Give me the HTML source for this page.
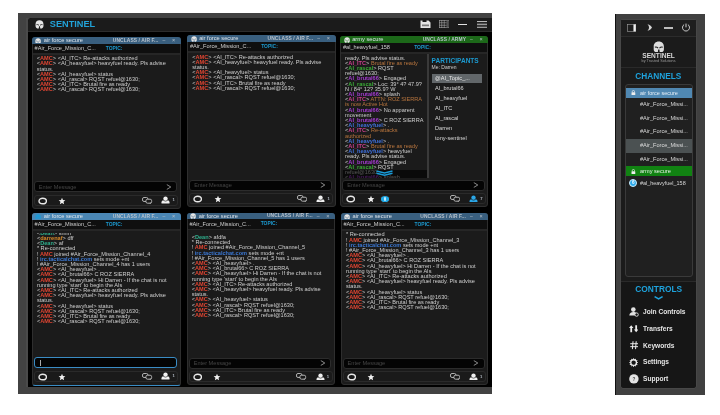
<!DOCTYPE html><html><head><meta charset="utf-8"><style>
html,body{margin:0;padding:0;background:#fff;width:720px;height:415px;overflow:hidden;font-family:"Liberation Sans", sans-serif;-webkit-font-smoothing:antialiased;}
b{font-weight:bold}
</style></head><body><div style="position:relative;width:720px;height:415px;overflow:hidden;will-change:transform">
<div style="position:absolute;left:18px;top:13px;width:474px;height:381px;background:#424242"></div>
<div style="position:absolute;left:26px;top:18px;width:2px;height:369px;background:#4a4a4a"></div>
<div style="position:absolute;left:28px;top:18px;width:464px;height:369.4px;background:#000;border-radius:4px 0 0 0"></div>
<div style="position:absolute;left:28px;top:18px;width:464px;height:13px;background:#1b1b1b;border-radius:4px 0 0 0"></div>
<div style="position:absolute;left:28px;top:31px;width:464px;height:0.9px;background:#2c2c2c"></div>
<svg style="position:absolute;left:35.3px;top:19.9px" width="9" height="8.8" viewBox="0 0 20 20" preserveAspectRatio="none"><path d="M10 0.8C4.3 0.8 1.2 4.5 1.2 9.5V13.8C1.2 16.5 2.8 18.6 5 19.2H8.4L8.9 14.3H11.1L11.6 19.2H15C17.2 18.6 18.8 16.5 18.8 13.8V9.5C18.8 4.5 15.7 0.8 10 0.8Z" fill="#e6e6e6"/><path d="M3.2 10.6Q6 9.4 8.9 12" stroke="#1b1b1b" stroke-width="1.9" fill="none"/><path d="M16.8 10.6Q14 9.4 11.1 12" stroke="#1b1b1b" stroke-width="1.9" fill="none"/></svg>
<div style="position:absolute;left:49.8px;top:19.08px;font-size:9.2px;line-height:11.04px;color:#22a2d8;font-weight:bold;white-space:nowrap;">SENTINEL</div>
<svg style="position:absolute;left:420px;top:20px" width="11" height="8.5" viewBox="0 0 22 17"><path d="M1 1h4v3h8V1h4l4 4v11H1z" fill="#e4e4e4"/><rect x="4" y="9" width="14" height="3.5" fill="#7a7a7a"/></svg>
<svg style="position:absolute;left:438.5px;top:20.2px" width="10.5" height="8" viewBox="0 0 21 16"><g fill="none" stroke="#a8a8a8" stroke-width="1.2"><rect x="0.6" y="0.6" width="19.8" height="14.8"/><line x1="5.5" y1="0" x2="5.5" y2="16"/><line x1="10.5" y1="0" x2="10.5" y2="16"/><line x1="0" y1="5.5" x2="16" y2="5.5"/><line x1="0" y1="10.5" x2="16" y2="10.5"/></g><rect x="15" y="1.5" width="4.5" height="13" fill="#555"/></svg>
<div style="position:absolute;left:457.5px;top:23.6px;width:9.2px;height:1.5px;background:#e0e0e0"></div>
<svg style="position:absolute;left:476.5px;top:20.6px" width="10.5" height="7" viewBox="0 0 21 14"><rect x="0" y="0.5" width="21" height="1.6" fill="#eee"/><rect x="0" y="5.2" width="21" height="3.2" fill="#9a9a9a"/><rect x="0" y="11.6" width="21" height="1.6" fill="#eee"/></svg>
<div style="position:absolute;left:31.8px;top:37px;width:149.0px;height:171.8px;background:#1b1b1b;border:1px solid #2e2e2e;box-sizing:border-box;border-radius:3px;overflow:hidden"></div>
<div style="position:absolute;left:31.8px;top:37px;width:149.0px;height:6.8px;background:#395f7f;border-radius:3px 3px 0 0"></div>
<svg style="position:absolute;left:35.4px;top:37.6px" width="6.2" height="5.9" viewBox="0 0 20 20" preserveAspectRatio="none"><path d="M10 0.8C4.3 0.8 1.2 4.5 1.2 9.5V13.8C1.2 16.5 2.8 18.6 5 19.2H8.4L8.9 14.3H11.1L11.6 19.2H15C17.2 18.6 18.8 16.5 18.8 13.8V9.5C18.8 4.5 15.7 0.8 10 0.8Z" fill="#e6e6e6"/><path d="M3.2 10.6Q6 9.4 8.9 12" stroke="#395f7f" stroke-width="1.9" fill="none"/><path d="M16.8 10.6Q14 9.4 11.1 12" stroke="#395f7f" stroke-width="1.9" fill="none"/></svg>
<div style="position:absolute;left:43.8px;top:37.08px;font-size:5.7px;line-height:6.84px;color:#dce3ea;font-weight:normal;white-space:nowrap;">air force secure</div>
<div style="position:absolute;right:561.60px;top:37.66px;font-size:4.9px;line-height:5.88px;color:#b8c2cc;font-weight:bold;letter-spacing:0.1px;white-space:nowrap">UNCLASS / AIR F...</div>
<div style="position:absolute;left:162.5px;top:37.20px;font-size:5px;line-height:6.00px;color:#b8c0c8;font-weight:normal;white-space:nowrap;">&#8211;</div>
<div style="position:absolute;left:172.0px;top:37.10px;font-size:5.5px;line-height:6.60px;color:#b8c0c8;font-weight:normal;white-space:nowrap;">&#215;</div>
<div style="position:absolute;left:32.8px;top:43.8px;width:147.0px;height:9.2px;background:#0f0f0f"></div>
<div style="position:absolute;left:32.8px;top:53.1px;width:147.0px;height:1.8px;background:#262626"></div>
<div style="position:absolute;left:34.6px;top:45.04px;font-size:5.6px;line-height:6.72px;color:#cfcfcf;font-weight:normal;white-space:nowrap;">#Air_Force_Mission_C...</div>
<div style="position:absolute;left:105.8px;top:45.63px;font-size:4.95px;line-height:5.94px;color:#1c9ad0;font-weight:bold;white-space:nowrap;">TOPIC:</div>
<div style="position:absolute;left:32.8px;top:54.90px;width:147.0px;height:124.40px;overflow:hidden">
<div style="position:absolute;left:4.0px;top:0.34px;font-size:5.6px;line-height:6.72px;color:#cfcfcf;font-weight:normal;white-space:nowrap;">&lt;<b style="color:#e04532">AMC</b>&gt; &lt;AI_ITC&gt; Re-attacks authorized</div>
<div style="position:absolute;left:4.0px;top:5.54px;font-size:5.6px;line-height:6.72px;color:#cfcfcf;font-weight:normal;white-space:nowrap;">&lt;<b style="color:#e04532">AMC</b>&gt; &lt;AI_heavyfuel&gt; heavyfuel ready. Pls advise</div>
<div style="position:absolute;left:4.0px;top:10.74px;font-size:5.6px;line-height:6.72px;color:#cfcfcf;font-weight:normal;white-space:nowrap;">status.</div>
<div style="position:absolute;left:4.0px;top:15.94px;font-size:5.6px;line-height:6.72px;color:#cfcfcf;font-weight:normal;white-space:nowrap;">&lt;<b style="color:#e04532">AMC</b>&gt; &lt;AI_heavyfuel&gt; status</div>
<div style="position:absolute;left:4.0px;top:21.14px;font-size:5.6px;line-height:6.72px;color:#cfcfcf;font-weight:normal;white-space:nowrap;">&lt;<b style="color:#e04532">AMC</b>&gt; &lt;AI_rascal&gt; RQST refuel@1630;</div>
<div style="position:absolute;left:4.0px;top:26.34px;font-size:5.6px;line-height:6.72px;color:#cfcfcf;font-weight:normal;white-space:nowrap;">&lt;<b style="color:#e04532">AMC</b>&gt; &lt;AI_ITC&gt; Brutal fire as ready</div>
<div style="position:absolute;left:4.0px;top:31.54px;font-size:5.6px;line-height:6.72px;color:#cfcfcf;font-weight:normal;white-space:nowrap;">&lt;<b style="color:#e04532">AMC</b>&gt; &lt;AI_rascal&gt; RQST refuel@1630;</div>
</div>
<div style="position:absolute;left:34.0px;top:181.3px;width:143.2px;height:11.2px;background:#040404;border:1px solid #2c2c2c;box-sizing:border-box;border-radius:3px"></div>
<div style="position:absolute;left:38.8px;top:183.64px;font-size:5.6px;line-height:6.72px;color:#464646;font-weight:normal;white-space:nowrap;">Enter Message</div>
<svg style="position:absolute;left:165.60000000000002px;top:183.9px" width="5.6" height="6" viewBox="0 0 5.6 6"><path d="M0.8 0.6L4.8 3 0.8 5.4" stroke="#9a9a9a" stroke-width="0.9" fill="none"/></svg>
<div style="position:absolute;left:34.0px;top:194.9px;width:144.4px;height:11.1px;background:#1a1a1a;border:1px solid #2a2a2a;box-sizing:border-box;border-radius:3px"></div>
<svg style="position:absolute;left:38.0px;top:196.60000000000002px" width="9.4" height="8" viewBox="0 0 9.4 8"><ellipse cx="4.7" cy="4" rx="3.7" ry="2.8" stroke="#e8e8e8" stroke-width="1.4" fill="none"/></svg>
<svg style="position:absolute;left:58.400000000000006px;top:196.60000000000002px" width="8" height="8" viewBox="0 0 24 24"><path d="M12 2l2.9 6.9 7.1.6-5.4 4.7 1.7 7.3L12 17.7 5.7 21.5l1.7-7.3L2 9.5l7.1-.6z" fill="#f0f0f0"/></svg>
<svg style="position:absolute;left:142.20000000000002px;top:196.50000000000003px" width="10.4" height="7.2" viewBox="0 0 21 14.5"><rect x="1" y="1" width="11" height="8" rx="3" fill="none" stroke="#c4c4c4" stroke-width="1.8"/><rect x="8" y="4.5" width="11.5" height="8" rx="3" fill="#1a1a1a" stroke="#c4c4c4" stroke-width="1.8"/><path d="M15 12l2.5 2.2V11z" fill="#c4c4c4"/></svg>
<svg style="position:absolute;left:161.4px;top:196.20000000000002px" width="9" height="7.6" viewBox="0 0 18 15"><path d="M1 15v-2.5C1 9.5 3.5 8 9 8s8 1.5 8 4.5V15z" fill="#f0f0f0"/><circle cx="9" cy="5.2" r="5" fill="#f0f0f0" stroke="#1a1a1a" stroke-width="1.2"/></svg>
<div style="position:absolute;left:172.60000000000002px;top:197.48px;font-size:4.2px;line-height:5.04px;color:#b4bcc6;font-weight:bold;white-space:nowrap;">1</div>
<div style="position:absolute;left:187.2px;top:35.1px;width:148.40000000000003px;height:172.0px;background:#1b1b1b;border:1px solid #2e2e2e;box-sizing:border-box;border-radius:3px;overflow:hidden"></div>
<div style="position:absolute;left:187.2px;top:35.1px;width:148.40000000000003px;height:6.8px;background:#395f7f;border-radius:3px 3px 0 0"></div>
<svg style="position:absolute;left:190.79999999999998px;top:35.7px" width="6.2" height="5.9" viewBox="0 0 20 20" preserveAspectRatio="none"><path d="M10 0.8C4.3 0.8 1.2 4.5 1.2 9.5V13.8C1.2 16.5 2.8 18.6 5 19.2H8.4L8.9 14.3H11.1L11.6 19.2H15C17.2 18.6 18.8 16.5 18.8 13.8V9.5C18.8 4.5 15.7 0.8 10 0.8Z" fill="#e6e6e6"/><path d="M3.2 10.6Q6 9.4 8.9 12" stroke="#395f7f" stroke-width="1.9" fill="none"/><path d="M16.8 10.6Q14 9.4 11.1 12" stroke="#395f7f" stroke-width="1.9" fill="none"/></svg>
<div style="position:absolute;left:199.2px;top:35.18px;font-size:5.7px;line-height:6.84px;color:#dce3ea;font-weight:normal;white-space:nowrap;">air force secure</div>
<div style="position:absolute;right:406.80px;top:35.76px;font-size:4.9px;line-height:5.88px;color:#b8c2cc;font-weight:bold;letter-spacing:0.1px;white-space:nowrap">UNCLASS / AIR F...</div>
<div style="position:absolute;left:317.3px;top:35.30px;font-size:5px;line-height:6.00px;color:#b8c0c8;font-weight:normal;white-space:nowrap;">&#8211;</div>
<div style="position:absolute;left:326.8px;top:35.20px;font-size:5.5px;line-height:6.60px;color:#b8c0c8;font-weight:normal;white-space:nowrap;">&#215;</div>
<div style="position:absolute;left:188.2px;top:41.9px;width:146.40000000000003px;height:9.2px;background:#0f0f0f"></div>
<div style="position:absolute;left:188.2px;top:51.2px;width:146.40000000000003px;height:1.8px;background:#262626"></div>
<div style="position:absolute;left:190.0px;top:43.14px;font-size:5.6px;line-height:6.72px;color:#cfcfcf;font-weight:normal;white-space:nowrap;">#Air_Force_Mission_C...</div>
<div style="position:absolute;left:261.2px;top:43.73px;font-size:4.95px;line-height:5.94px;color:#1c9ad0;font-weight:bold;white-space:nowrap;">TOPIC:</div>
<div style="position:absolute;left:188.2px;top:53.00px;width:146.40000000000003px;height:124.60px;overflow:hidden">
<div style="position:absolute;left:4.1px;top:0.54px;font-size:5.6px;line-height:6.72px;color:#cfcfcf;font-weight:normal;white-space:nowrap;">&lt;<b style="color:#e04532">AMC</b>&gt; &lt;AI_ITC&gt; Re-attacks authorized</div>
<div style="position:absolute;left:4.1px;top:5.74px;font-size:5.6px;line-height:6.72px;color:#cfcfcf;font-weight:normal;white-space:nowrap;">&lt;<b style="color:#e04532">AMC</b>&gt; &lt;AI_heavyfuel&gt; heavyfuel ready. Pls advise</div>
<div style="position:absolute;left:4.1px;top:10.94px;font-size:5.6px;line-height:6.72px;color:#cfcfcf;font-weight:normal;white-space:nowrap;">status.</div>
<div style="position:absolute;left:4.1px;top:16.14px;font-size:5.6px;line-height:6.72px;color:#cfcfcf;font-weight:normal;white-space:nowrap;">&lt;<b style="color:#e04532">AMC</b>&gt; &lt;AI_heavyfuel&gt; status</div>
<div style="position:absolute;left:4.1px;top:21.34px;font-size:5.6px;line-height:6.72px;color:#cfcfcf;font-weight:normal;white-space:nowrap;">&lt;<b style="color:#e04532">AMC</b>&gt; &lt;AI_rascal&gt; RQST refuel@1630;</div>
<div style="position:absolute;left:4.1px;top:26.54px;font-size:5.6px;line-height:6.72px;color:#cfcfcf;font-weight:normal;white-space:nowrap;">&lt;<b style="color:#e04532">AMC</b>&gt; &lt;AI_ITC&gt; Brutal fire as ready</div>
<div style="position:absolute;left:4.1px;top:31.74px;font-size:5.6px;line-height:6.72px;color:#cfcfcf;font-weight:normal;white-space:nowrap;">&lt;<b style="color:#e04532">AMC</b>&gt; &lt;AI_rascal&gt; RQST refuel@1630;</div>
</div>
<div style="position:absolute;left:189.39999999999998px;top:179.6px;width:142.60000000000002px;height:11.2px;background:#040404;border:1px solid #2c2c2c;box-sizing:border-box;border-radius:3px"></div>
<div style="position:absolute;left:194.2px;top:181.94px;font-size:5.6px;line-height:6.72px;color:#464646;font-weight:normal;white-space:nowrap;">Enter Message</div>
<svg style="position:absolute;left:320.40000000000003px;top:182.2px" width="5.6" height="6" viewBox="0 0 5.6 6"><path d="M0.8 0.6L4.8 3 0.8 5.4" stroke="#9a9a9a" stroke-width="0.9" fill="none"/></svg>
<div style="position:absolute;left:189.39999999999998px;top:193.2px;width:143.80000000000004px;height:11.1px;background:#1a1a1a;border:1px solid #2a2a2a;box-sizing:border-box;border-radius:3px"></div>
<svg style="position:absolute;left:193.39999999999998px;top:194.9px" width="9.4" height="8" viewBox="0 0 9.4 8"><ellipse cx="4.7" cy="4" rx="3.7" ry="2.8" stroke="#e8e8e8" stroke-width="1.4" fill="none"/></svg>
<svg style="position:absolute;left:213.79999999999998px;top:194.9px" width="8" height="8" viewBox="0 0 24 24"><path d="M12 2l2.9 6.9 7.1.6-5.4 4.7 1.7 7.3L12 17.7 5.7 21.5l1.7-7.3L2 9.5l7.1-.6z" fill="#f0f0f0"/></svg>
<svg style="position:absolute;left:297.0px;top:194.8px" width="10.4" height="7.2" viewBox="0 0 21 14.5"><rect x="1" y="1" width="11" height="8" rx="3" fill="none" stroke="#c4c4c4" stroke-width="1.8"/><rect x="8" y="4.5" width="11.5" height="8" rx="3" fill="#1a1a1a" stroke="#c4c4c4" stroke-width="1.8"/><path d="M15 12l2.5 2.2V11z" fill="#c4c4c4"/></svg>
<svg style="position:absolute;left:316.20000000000005px;top:194.5px" width="9" height="7.6" viewBox="0 0 18 15"><path d="M1 15v-2.5C1 9.5 3.5 8 9 8s8 1.5 8 4.5V15z" fill="#f0f0f0"/><circle cx="9" cy="5.2" r="5" fill="#f0f0f0" stroke="#1a1a1a" stroke-width="1.2"/></svg>
<div style="position:absolute;left:327.40000000000003px;top:195.78px;font-size:4.2px;line-height:5.04px;color:#b4bcc6;font-weight:bold;white-space:nowrap;">1</div>
<div style="position:absolute;left:340.2px;top:36.2px;width:148.2px;height:171.10000000000002px;background:#1b1b1b;border:1px solid #2e2e2e;box-sizing:border-box;border-radius:3px;overflow:hidden"></div>
<div style="position:absolute;left:340.2px;top:36.2px;width:148.2px;height:6.8px;background:#1c6819;border-radius:3px 3px 0 0"></div>
<svg style="position:absolute;left:343.8px;top:36.800000000000004px" width="6.2" height="5.9" viewBox="0 0 20 20" preserveAspectRatio="none"><path d="M10 0.8C4.3 0.8 1.2 4.5 1.2 9.5V13.8C1.2 16.5 2.8 18.6 5 19.2H8.4L8.9 14.3H11.1L11.6 19.2H15C17.2 18.6 18.8 16.5 18.8 13.8V9.5C18.8 4.5 15.7 0.8 10 0.8Z" fill="#e6e6e6"/><path d="M3.2 10.6Q6 9.4 8.9 12" stroke="#1c6819" stroke-width="1.9" fill="none"/><path d="M16.8 10.6Q14 9.4 11.1 12" stroke="#1c6819" stroke-width="1.9" fill="none"/></svg>
<div style="position:absolute;left:352.2px;top:36.28px;font-size:5.7px;line-height:6.84px;color:#dce3ea;font-weight:normal;white-space:nowrap;">army secure</div>
<div style="position:absolute;right:254.00px;top:36.86px;font-size:4.9px;line-height:5.88px;color:#b8c2cc;font-weight:bold;letter-spacing:0.1px;white-space:nowrap">UNCLASS / ARMY</div>
<div style="position:absolute;left:470.09999999999997px;top:36.40px;font-size:5px;line-height:6.00px;color:#b8c0c8;font-weight:normal;white-space:nowrap;">&#8211;</div>
<div style="position:absolute;left:479.59999999999997px;top:36.30px;font-size:5.5px;line-height:6.60px;color:#b8c0c8;font-weight:normal;white-space:nowrap;">&#215;</div>
<div style="position:absolute;left:341.2px;top:43.0px;width:146.2px;height:9.2px;background:#0f0f0f"></div>
<div style="position:absolute;left:341.2px;top:52.300000000000004px;width:146.2px;height:1.8px;background:#262626"></div>
<div style="position:absolute;left:343.0px;top:44.24px;font-size:5.6px;line-height:6.72px;color:#cfcfcf;font-weight:normal;white-space:nowrap;">#al_heavyfuel_158</div>
<div style="position:absolute;left:414.2px;top:44.83px;font-size:4.95px;line-height:5.94px;color:#1c9ad0;font-weight:bold;white-space:nowrap;">TOPIC:</div>
<div style="position:absolute;left:341.2px;top:54.10px;width:146.2px;height:123.70px;overflow:hidden">
<div style="position:absolute;left:3.9000000000000004px;top:0.44px;font-size:5.6px;line-height:6.72px;color:#cfcfcf;font-weight:normal;white-space:nowrap;">ready. Pls advise status.</div>
<div style="position:absolute;left:3.9000000000000004px;top:5.64px;font-size:5.6px;line-height:6.72px;color:#cfcfcf;font-weight:normal;white-space:nowrap;">&lt;<b style="color:#cc3f8e">AI_ITC</b>&gt; <span style="color:#b8753e">Brutal fire as ready</span></div>
<div style="position:absolute;left:3.9000000000000004px;top:10.84px;font-size:5.6px;line-height:6.72px;color:#cfcfcf;font-weight:normal;white-space:nowrap;">&lt;<b style="color:#3aab36">AI_rascal</b>&gt; RQST</div>
<div style="position:absolute;left:3.9000000000000004px;top:16.04px;font-size:5.6px;line-height:6.72px;color:#cfcfcf;font-weight:normal;white-space:nowrap;">refuel@1630;</div>
<div style="position:absolute;left:3.9000000000000004px;top:21.24px;font-size:5.6px;line-height:6.72px;color:#cfcfcf;font-weight:normal;white-space:nowrap;">&lt;<b style="color:#a33bd0">AI_brutal66</b>&gt; Engaged</div>
<div style="position:absolute;left:3.9000000000000004px;top:26.44px;font-size:5.6px;line-height:6.72px;color:#cfcfcf;font-weight:normal;white-space:nowrap;">&lt;<b style="color:#3aab36">AI_rascal</b>&gt; Loc: 39&#176; 4? 47.9?</div>
<div style="position:absolute;left:3.9000000000000004px;top:31.64px;font-size:5.6px;line-height:6.72px;color:#cfcfcf;font-weight:normal;white-space:nowrap;">N / 84&#176; 12? 35.9? W</div>
<div style="position:absolute;left:3.9000000000000004px;top:36.84px;font-size:5.6px;line-height:6.72px;color:#cfcfcf;font-weight:normal;white-space:nowrap;">&lt;<b style="color:#a33bd0">AI_brutal66</b>&gt; splash</div>
<div style="position:absolute;left:3.9000000000000004px;top:42.04px;font-size:5.6px;line-height:6.72px;color:#cfcfcf;font-weight:normal;white-space:nowrap;">&lt;<b style="color:#cc3f8e">AI_ITC</b>&gt; <span style="color:#b8753e">ATTN: ROZ SIERRA</span></div>
<div style="position:absolute;left:3.9000000000000004px;top:47.24px;font-size:5.6px;line-height:6.72px;color:#cfcfcf;font-weight:normal;white-space:nowrap;"><span style="color:#b8753e">is now Active Hot</span></div>
<div style="position:absolute;left:3.9000000000000004px;top:52.44px;font-size:5.6px;line-height:6.72px;color:#cfcfcf;font-weight:normal;white-space:nowrap;">&lt;<b style="color:#a33bd0">AI_brutal66</b>&gt; No apparent</div>
<div style="position:absolute;left:3.9000000000000004px;top:57.64px;font-size:5.6px;line-height:6.72px;color:#cfcfcf;font-weight:normal;white-space:nowrap;">movement</div>
<div style="position:absolute;left:3.9000000000000004px;top:62.84px;font-size:5.6px;line-height:6.72px;color:#cfcfcf;font-weight:normal;white-space:nowrap;">&lt;<b style="color:#a33bd0">AI_brutal66</b>&gt; C ROZ SIERRA</div>
<div style="position:absolute;left:3.9000000000000004px;top:68.04px;font-size:5.6px;line-height:6.72px;color:#cfcfcf;font-weight:normal;white-space:nowrap;">&lt;<b style="color:#3f6fd8">AI_heavyfuel</b>&gt; .</div>
<div style="position:absolute;left:3.9000000000000004px;top:73.24px;font-size:5.6px;line-height:6.72px;color:#cfcfcf;font-weight:normal;white-space:nowrap;">&lt;<b style="color:#cc3f8e">AI_ITC</b>&gt; <span style="color:#b8753e">Re-attacks</span></div>
<div style="position:absolute;left:3.9000000000000004px;top:78.44px;font-size:5.6px;line-height:6.72px;color:#cfcfcf;font-weight:normal;white-space:nowrap;"><span style="color:#b8753e">authorized</span></div>
<div style="position:absolute;left:3.9000000000000004px;top:83.64px;font-size:5.6px;line-height:6.72px;color:#cfcfcf;font-weight:normal;white-space:nowrap;">&lt;<b style="color:#3f6fd8">AI_heavyfuel</b>&gt; .</div>
<div style="position:absolute;left:3.9000000000000004px;top:88.84px;font-size:5.6px;line-height:6.72px;color:#cfcfcf;font-weight:normal;white-space:nowrap;">&lt;<b style="color:#cc3f8e">AI_ITC</b>&gt; <span style="color:#b8753e">Brutal fire as ready</span></div>
<div style="position:absolute;left:3.9000000000000004px;top:94.04px;font-size:5.6px;line-height:6.72px;color:#cfcfcf;font-weight:normal;white-space:nowrap;">&lt;<b style="color:#3f6fd8">AI_heavyfuel</b>&gt; heavyfuel</div>
<div style="position:absolute;left:3.9000000000000004px;top:99.24px;font-size:5.6px;line-height:6.72px;color:#cfcfcf;font-weight:normal;white-space:nowrap;">ready. Pls advise status.</div>
<div style="position:absolute;left:3.9000000000000004px;top:104.44px;font-size:5.6px;line-height:6.72px;color:#cfcfcf;font-weight:normal;white-space:nowrap;">&lt;<b style="color:#a33bd0">AI_brutal66</b>&gt; Engaged</div>
<div style="position:absolute;left:3.9000000000000004px;top:109.64px;font-size:5.6px;line-height:6.72px;color:#cfcfcf;font-weight:normal;white-space:nowrap;">&lt;<b style="color:#3aab36">AI_rascal</b>&gt; RQST</div>
<div style="position:absolute;left:3.9000000000000004px;top:114.84px;font-size:5.6px;line-height:6.72px;color:#cfcfcf;font-weight:normal;white-space:nowrap;">refuel@1630;</div>
<div style="position:absolute;left:3.9000000000000004px;top:120.04px;font-size:5.6px;line-height:6.72px;color:#cfcfcf;font-weight:normal;white-space:nowrap;">&lt;<b style="color:#a33bd0">AI_brutal66</b>&gt; splash</div>
</div>
<div style="position:absolute;left:342.4px;top:179.8px;width:142.39999999999998px;height:11.2px;background:#040404;border:1px solid #2c2c2c;box-sizing:border-box;border-radius:3px"></div>
<div style="position:absolute;left:347.2px;top:182.14px;font-size:5.6px;line-height:6.72px;color:#464646;font-weight:normal;white-space:nowrap;">Enter Message</div>
<svg style="position:absolute;left:473.2px;top:182.4px" width="5.6" height="6" viewBox="0 0 5.6 6"><path d="M0.8 0.6L4.8 3 0.8 5.4" stroke="#9a9a9a" stroke-width="0.9" fill="none"/></svg>
<div style="position:absolute;left:342.4px;top:193.4px;width:143.6px;height:11.1px;background:#1a1a1a;border:1px solid #2a2a2a;box-sizing:border-box;border-radius:3px"></div>
<svg style="position:absolute;left:346.4px;top:195.10000000000002px" width="9.4" height="8" viewBox="0 0 9.4 8"><ellipse cx="4.7" cy="4" rx="3.7" ry="2.8" stroke="#e8e8e8" stroke-width="1.4" fill="none"/></svg>
<svg style="position:absolute;left:366.8px;top:195.10000000000002px" width="8" height="8" viewBox="0 0 24 24"><path d="M12 2l2.9 6.9 7.1.6-5.4 4.7 1.7 7.3L12 17.7 5.7 21.5l1.7-7.3L2 9.5l7.1-.6z" fill="#f0f0f0"/></svg>
<div style="position:absolute;left:379.59999999999997px;top:195.20000000000002px;width:10.6px;height:7.6px;border-radius:50%;background:#21a9e6;box-sizing:border-box;border:0.7px solid #2a1a10"></div>
<div style="position:absolute;left:383.59999999999997px;top:196.8px;width:2.6px;height:4.2px;border-radius:1px;background:#bfe8fb"></div>
<svg style="position:absolute;left:449.79999999999995px;top:195.00000000000003px" width="10.4" height="7.2" viewBox="0 0 21 14.5"><rect x="1" y="1" width="11" height="8" rx="3" fill="none" stroke="#c4c4c4" stroke-width="1.8"/><rect x="8" y="4.5" width="11.5" height="8" rx="3" fill="#1a1a1a" stroke="#c4c4c4" stroke-width="1.8"/><path d="M15 12l2.5 2.2V11z" fill="#c4c4c4"/></svg>
<svg style="position:absolute;left:469.0px;top:194.70000000000002px" width="9" height="7.6" viewBox="0 0 18 15"><path d="M1 15v-2.5C1 9.5 3.5 8 9 8s8 1.5 8 4.5V15z" fill="#2ba6e6"/><circle cx="9" cy="5.2" r="5" fill="#2ba6e6" stroke="#1a1a1a" stroke-width="1.2"/></svg>
<div style="position:absolute;left:480.2px;top:195.98px;font-size:4.2px;line-height:5.04px;color:#b4bcc6;font-weight:bold;white-space:nowrap;">7</div>
<div style="position:absolute;left:427.2px;top:54.0px;width:2.2px;height:123.80000000000001px;background:#3a3a3a"></div>
<div style="position:absolute;left:431.6px;top:56.70px;font-size:6.5px;line-height:7.80px;color:#1c9ad0;font-weight:bold;white-space:nowrap;">PARTICIPANTS</div>
<div style="position:absolute;left:431.6px;top:64.00px;font-size:5.0px;line-height:6.00px;color:#cfcfcf;font-weight:normal;white-space:nowrap;">Me: Darren</div>
<div style="position:absolute;left:431.6px;top:73.6px;width:50.6px;height:9.4px;background:#62676a"></div>
<div style="position:absolute;left:435.0px;top:74.94px;font-size:5.6px;line-height:6.72px;color:#e8e8e8;font-weight:normal;white-space:nowrap;">@AI_Topic_...</div>
<div style="position:absolute;left:435.0px;top:84.64px;font-size:5.6px;line-height:6.72px;color:#d8d8d8;font-weight:normal;white-space:nowrap;">AI_brutal66</div>
<div style="position:absolute;left:435.0px;top:94.64px;font-size:5.6px;line-height:6.72px;color:#d8d8d8;font-weight:normal;white-space:nowrap;">AI_heavyfuel</div>
<div style="position:absolute;left:435.0px;top:104.64px;font-size:5.6px;line-height:6.72px;color:#d8d8d8;font-weight:normal;white-space:nowrap;">AI_ITC</div>
<div style="position:absolute;left:435.0px;top:114.64px;font-size:5.6px;line-height:6.72px;color:#d8d8d8;font-weight:normal;white-space:nowrap;">AI_rascal</div>
<div style="position:absolute;left:435.0px;top:124.64px;font-size:5.6px;line-height:6.72px;color:#d8d8d8;font-weight:normal;white-space:nowrap;">Darren</div>
<div style="position:absolute;left:435.0px;top:134.64px;font-size:5.6px;line-height:6.72px;color:#d8d8d8;font-weight:normal;white-space:nowrap;">tony-sentinel</div>
<div style="position:absolute;left:342.5px;top:169.8px;width:84px;height:8px;background:rgba(0,0,0,0.6)"></div>
<svg style="position:absolute;left:376.3px;top:170.4px" width="17" height="6" viewBox="0 0 17 6"><path d="M0.5 0.9L8.5 2.9 16.5 0.9" stroke="#1a9ad6" stroke-width="1.5" fill="none"/><path d="M0.5 3.2L8.5 5.2 16.5 3.2" stroke="#1a9ad6" stroke-width="1.5" fill="none"/></svg>
<div style="position:absolute;left:31.8px;top:213px;width:149.0px;height:173.0px;background:#1b1b1b;border:1px solid #2e2e2e;border-bottom:1.6px solid #3a8cc4;box-sizing:border-box;border-radius:3px;overflow:hidden"></div>
<div style="position:absolute;left:31.8px;top:213px;width:149.0px;height:6.8px;background:#4a86b4;border-radius:3px 3px 0 0"></div>
<svg style="position:absolute;left:35.4px;top:213.6px" width="6.2" height="5.9" viewBox="0 0 20 20" preserveAspectRatio="none"><path d="M10 0.8C4.3 0.8 1.2 4.5 1.2 9.5V13.8C1.2 16.5 2.8 18.6 5 19.2H8.4L8.9 14.3H11.1L11.6 19.2H15C17.2 18.6 18.8 16.5 18.8 13.8V9.5C18.8 4.5 15.7 0.8 10 0.8Z" fill="#1a9ad8"/><path d="M3.2 10.6Q6 9.4 8.9 12" stroke="#4a86b4" stroke-width="1.9" fill="none"/><path d="M16.8 10.6Q14 9.4 11.1 12" stroke="#4a86b4" stroke-width="1.9" fill="none"/></svg>
<div style="position:absolute;left:43.8px;top:213.08px;font-size:5.7px;line-height:6.84px;color:#dce3ea;font-weight:normal;white-space:nowrap;">air force secure</div>
<div style="position:absolute;right:561.60px;top:213.66px;font-size:4.9px;line-height:5.88px;color:#b8c2cc;font-weight:bold;letter-spacing:0.1px;white-space:nowrap">UNCLASS / AIR F...</div>
<div style="position:absolute;left:162.5px;top:213.20px;font-size:5px;line-height:6.00px;color:#b8c0c8;font-weight:normal;white-space:nowrap;">&#8211;</div>
<div style="position:absolute;left:172.0px;top:213.10px;font-size:5.5px;line-height:6.60px;color:#b8c0c8;font-weight:normal;white-space:nowrap;">&#215;</div>
<div style="position:absolute;left:32.8px;top:219.8px;width:147.0px;height:9.2px;background:#0f0f0f"></div>
<div style="position:absolute;left:32.8px;top:229.1px;width:147.0px;height:1.8px;background:#262626"></div>
<div style="position:absolute;left:34.6px;top:221.04px;font-size:5.6px;line-height:6.72px;color:#cfcfcf;font-weight:normal;white-space:nowrap;">#Air_Force_Mission_C...</div>
<div style="position:absolute;left:105.8px;top:221.63px;font-size:4.95px;line-height:5.94px;color:#1c9ad0;font-weight:bold;white-space:nowrap;">TOPIC:</div>
<div style="position:absolute;left:32.8px;top:232.80px;width:147.0px;height:123.70px;overflow:hidden">
<div style="position:absolute;left:4.1px;top:-2.96px;font-size:5.6px;line-height:6.72px;color:#cfcfcf;font-weight:normal;white-space:nowrap;">&lt;<b style="color:#2fae8c">Dean</b>&gt; shhh</div>
<div style="position:absolute;left:4.1px;top:2.24px;font-size:5.6px;line-height:6.72px;color:#cfcfcf;font-weight:normal;white-space:nowrap;">&lt;<b style="color:#d88b2a">darrenaf</b>&gt; dff</div>
<div style="position:absolute;left:4.1px;top:7.44px;font-size:5.6px;line-height:6.72px;color:#cfcfcf;font-weight:normal;white-space:nowrap;">&lt;<b style="color:#2fae8c">Dean</b>&gt; af</div>
<div style="position:absolute;left:4.1px;top:12.64px;font-size:5.6px;line-height:6.72px;color:#cfcfcf;font-weight:normal;white-space:nowrap;">* Re-connected</div>
<div style="position:absolute;left:4.1px;top:17.84px;font-size:5.6px;line-height:6.72px;color:#cfcfcf;font-weight:normal;white-space:nowrap;">! <b style="color:#e04532">AMC</b> joined #Air_Force_Mission_Channel_4</div>
<div style="position:absolute;left:4.1px;top:23.04px;font-size:5.6px;line-height:6.72px;color:#cfcfcf;font-weight:normal;white-space:nowrap;">! <b style="color:#3b78d4">irc.tacticalchat.com</b> sets mode +nt</div>
<div style="position:absolute;left:4.1px;top:28.24px;font-size:5.6px;line-height:6.72px;color:#cfcfcf;font-weight:normal;white-space:nowrap;">! #Air_Force_Mission_Channel_4 has 1 users</div>
<div style="position:absolute;left:4.1px;top:33.44px;font-size:5.6px;line-height:6.72px;color:#cfcfcf;font-weight:normal;white-space:nowrap;">&lt;<b style="color:#e04532">AMC</b>&gt; &lt;AI_heavyfuel&gt; .</div>
<div style="position:absolute;left:4.1px;top:38.64px;font-size:5.6px;line-height:6.72px;color:#cfcfcf;font-weight:normal;white-space:nowrap;">&lt;<b style="color:#e04532">AMC</b>&gt; &lt;AI_brutal66&gt; C ROZ SIERRA</div>
<div style="position:absolute;left:4.1px;top:43.84px;font-size:5.6px;line-height:6.72px;color:#cfcfcf;font-weight:normal;white-space:nowrap;">&lt;<b style="color:#e04532">AMC</b>&gt; &lt;AI_heavyfuel&gt; Hi Darren - If the chat is not</div>
<div style="position:absolute;left:4.1px;top:49.04px;font-size:5.6px;line-height:6.72px;color:#cfcfcf;font-weight:normal;white-space:nowrap;">running type 'start' to begin the AIs</div>
<div style="position:absolute;left:4.1px;top:54.24px;font-size:5.6px;line-height:6.72px;color:#cfcfcf;font-weight:normal;white-space:nowrap;">&lt;<b style="color:#e04532">AMC</b>&gt; &lt;AI_ITC&gt; Re-attacks authorized</div>
<div style="position:absolute;left:4.1px;top:59.44px;font-size:5.6px;line-height:6.72px;color:#cfcfcf;font-weight:normal;white-space:nowrap;">&lt;<b style="color:#e04532">AMC</b>&gt; &lt;AI_heavyfuel&gt; heavyfuel ready. Pls advise</div>
<div style="position:absolute;left:4.1px;top:64.64px;font-size:5.6px;line-height:6.72px;color:#cfcfcf;font-weight:normal;white-space:nowrap;">status.</div>
<div style="position:absolute;left:4.1px;top:69.84px;font-size:5.6px;line-height:6.72px;color:#cfcfcf;font-weight:normal;white-space:nowrap;">&lt;<b style="color:#e04532">AMC</b>&gt; &lt;AI_heavyfuel&gt; status</div>
<div style="position:absolute;left:4.1px;top:75.04px;font-size:5.6px;line-height:6.72px;color:#cfcfcf;font-weight:normal;white-space:nowrap;">&lt;<b style="color:#e04532">AMC</b>&gt; &lt;AI_rascal&gt; RQST refuel@1630;</div>
<div style="position:absolute;left:4.1px;top:80.24px;font-size:5.6px;line-height:6.72px;color:#cfcfcf;font-weight:normal;white-space:nowrap;">&lt;<b style="color:#e04532">AMC</b>&gt; &lt;AI_ITC&gt; Brutal fire as ready</div>
<div style="position:absolute;left:4.1px;top:85.44px;font-size:5.6px;line-height:6.72px;color:#cfcfcf;font-weight:normal;white-space:nowrap;">&lt;<b style="color:#e04532">AMC</b>&gt; &lt;AI_rascal&gt; RQST refuel@1630;</div>
</div>
<div style="position:absolute;left:34.0px;top:357.3px;width:143.2px;height:11.2px;background:#040404;border:1.4px solid #3a8cc4;box-sizing:border-box;border-radius:3px"></div>
<div style="position:absolute;left:40.4px;top:359.8px;width:0.9px;height:6px;background:#aaa"></div>
<div style="position:absolute;left:34.0px;top:370.90000000000003px;width:144.4px;height:11.1px;background:#1a1a1a;border:1px solid #2a2a2a;box-sizing:border-box;border-radius:3px"></div>
<svg style="position:absolute;left:38.0px;top:372.6px" width="9.4" height="8" viewBox="0 0 9.4 8"><ellipse cx="4.7" cy="4" rx="3.7" ry="2.8" stroke="#e8e8e8" stroke-width="1.4" fill="none"/></svg>
<svg style="position:absolute;left:58.400000000000006px;top:372.6px" width="8" height="8" viewBox="0 0 24 24"><path d="M12 2l2.9 6.9 7.1.6-5.4 4.7 1.7 7.3L12 17.7 5.7 21.5l1.7-7.3L2 9.5l7.1-.6z" fill="#f0f0f0"/></svg>
<svg style="position:absolute;left:142.20000000000002px;top:372.5px" width="10.4" height="7.2" viewBox="0 0 21 14.5"><rect x="1" y="1" width="11" height="8" rx="3" fill="none" stroke="#c4c4c4" stroke-width="1.8"/><rect x="8" y="4.5" width="11.5" height="8" rx="3" fill="#1a1a1a" stroke="#c4c4c4" stroke-width="1.8"/><path d="M15 12l2.5 2.2V11z" fill="#c4c4c4"/></svg>
<svg style="position:absolute;left:161.4px;top:372.20000000000005px" width="9" height="7.6" viewBox="0 0 18 15"><path d="M1 15v-2.5C1 9.5 3.5 8 9 8s8 1.5 8 4.5V15z" fill="#f0f0f0"/><circle cx="9" cy="5.2" r="5" fill="#f0f0f0" stroke="#1a1a1a" stroke-width="1.2"/></svg>
<div style="position:absolute;left:172.60000000000002px;top:373.48px;font-size:4.2px;line-height:5.04px;color:#b4bcc6;font-weight:bold;white-space:nowrap;">1</div>
<div style="position:absolute;left:186.7px;top:212.6px;width:148.3px;height:172.50000000000003px;background:#1b1b1b;border:1px solid #2e2e2e;box-sizing:border-box;border-radius:3px;overflow:hidden"></div>
<div style="position:absolute;left:186.7px;top:212.6px;width:148.3px;height:6.8px;background:#395f7f;border-radius:3px 3px 0 0"></div>
<svg style="position:absolute;left:190.29999999999998px;top:213.2px" width="6.2" height="5.9" viewBox="0 0 20 20" preserveAspectRatio="none"><path d="M10 0.8C4.3 0.8 1.2 4.5 1.2 9.5V13.8C1.2 16.5 2.8 18.6 5 19.2H8.4L8.9 14.3H11.1L11.6 19.2H15C17.2 18.6 18.8 16.5 18.8 13.8V9.5C18.8 4.5 15.7 0.8 10 0.8Z" fill="#e6e6e6"/><path d="M3.2 10.6Q6 9.4 8.9 12" stroke="#395f7f" stroke-width="1.9" fill="none"/><path d="M16.8 10.6Q14 9.4 11.1 12" stroke="#395f7f" stroke-width="1.9" fill="none"/></svg>
<div style="position:absolute;left:198.7px;top:212.68px;font-size:5.7px;line-height:6.84px;color:#dce3ea;font-weight:normal;white-space:nowrap;">air force secure</div>
<div style="position:absolute;right:407.40px;top:213.26px;font-size:4.9px;line-height:5.88px;color:#b8c2cc;font-weight:bold;letter-spacing:0.1px;white-space:nowrap">UNCLASS / AIR F...</div>
<div style="position:absolute;left:316.7px;top:212.80px;font-size:5px;line-height:6.00px;color:#b8c0c8;font-weight:normal;white-space:nowrap;">&#8211;</div>
<div style="position:absolute;left:326.2px;top:212.70px;font-size:5.5px;line-height:6.60px;color:#b8c0c8;font-weight:normal;white-space:nowrap;">&#215;</div>
<div style="position:absolute;left:187.7px;top:219.4px;width:146.3px;height:9.2px;background:#0f0f0f"></div>
<div style="position:absolute;left:187.7px;top:228.7px;width:146.3px;height:1.8px;background:#262626"></div>
<div style="position:absolute;left:189.5px;top:220.64px;font-size:5.6px;line-height:6.72px;color:#cfcfcf;font-weight:normal;white-space:nowrap;">#Air_Force_Mission_C...</div>
<div style="position:absolute;left:260.7px;top:221.23px;font-size:4.95px;line-height:5.94px;color:#1c9ad0;font-weight:bold;white-space:nowrap;">TOPIC:</div>
<div style="position:absolute;left:187.7px;top:230.50px;width:146.3px;height:125.10px;overflow:hidden">
<div style="position:absolute;left:4.0px;top:3.54px;font-size:5.6px;line-height:6.72px;color:#cfcfcf;font-weight:normal;white-space:nowrap;">&lt;<b style="color:#2fae8c">Dean</b>&gt; afdfa</div>
<div style="position:absolute;left:4.0px;top:8.74px;font-size:5.6px;line-height:6.72px;color:#cfcfcf;font-weight:normal;white-space:nowrap;">* Re-connected</div>
<div style="position:absolute;left:4.0px;top:13.94px;font-size:5.6px;line-height:6.72px;color:#cfcfcf;font-weight:normal;white-space:nowrap;">! <b style="color:#e04532">AMC</b> joined #Air_Force_Mission_Channel_5</div>
<div style="position:absolute;left:4.0px;top:19.14px;font-size:5.6px;line-height:6.72px;color:#cfcfcf;font-weight:normal;white-space:nowrap;">! <b style="color:#3b78d4">irc.tacticalchat.com</b> sets mode +nt</div>
<div style="position:absolute;left:4.0px;top:24.34px;font-size:5.6px;line-height:6.72px;color:#cfcfcf;font-weight:normal;white-space:nowrap;">! #Air_Force_Mission_Channel_5 has 1 users</div>
<div style="position:absolute;left:4.0px;top:29.54px;font-size:5.6px;line-height:6.72px;color:#cfcfcf;font-weight:normal;white-space:nowrap;">&lt;<b style="color:#e04532">AMC</b>&gt; &lt;AI_heavyfuel&gt; .</div>
<div style="position:absolute;left:4.0px;top:34.74px;font-size:5.6px;line-height:6.72px;color:#cfcfcf;font-weight:normal;white-space:nowrap;">&lt;<b style="color:#e04532">AMC</b>&gt; &lt;AI_brutal66&gt; C ROZ SIERRA</div>
<div style="position:absolute;left:4.0px;top:39.94px;font-size:5.6px;line-height:6.72px;color:#cfcfcf;font-weight:normal;white-space:nowrap;">&lt;<b style="color:#e04532">AMC</b>&gt; &lt;AI_heavyfuel&gt; Hi Darren - If the chat is not</div>
<div style="position:absolute;left:4.0px;top:45.14px;font-size:5.6px;line-height:6.72px;color:#cfcfcf;font-weight:normal;white-space:nowrap;">running type 'start' to begin the AIs</div>
<div style="position:absolute;left:4.0px;top:50.34px;font-size:5.6px;line-height:6.72px;color:#cfcfcf;font-weight:normal;white-space:nowrap;">&lt;<b style="color:#e04532">AMC</b>&gt; &lt;AI_ITC&gt; Re-attacks authorized</div>
<div style="position:absolute;left:4.0px;top:55.54px;font-size:5.6px;line-height:6.72px;color:#cfcfcf;font-weight:normal;white-space:nowrap;">&lt;<b style="color:#e04532">AMC</b>&gt; &lt;AI_heavyfuel&gt; heavyfuel ready. Pls advise</div>
<div style="position:absolute;left:4.0px;top:60.74px;font-size:5.6px;line-height:6.72px;color:#cfcfcf;font-weight:normal;white-space:nowrap;">status.</div>
<div style="position:absolute;left:4.0px;top:65.94px;font-size:5.6px;line-height:6.72px;color:#cfcfcf;font-weight:normal;white-space:nowrap;">&lt;<b style="color:#e04532">AMC</b>&gt; &lt;AI_heavyfuel&gt; status</div>
<div style="position:absolute;left:4.0px;top:71.14px;font-size:5.6px;line-height:6.72px;color:#cfcfcf;font-weight:normal;white-space:nowrap;">&lt;<b style="color:#e04532">AMC</b>&gt; &lt;AI_rascal&gt; RQST refuel@1630;</div>
<div style="position:absolute;left:4.0px;top:76.34px;font-size:5.6px;line-height:6.72px;color:#cfcfcf;font-weight:normal;white-space:nowrap;">&lt;<b style="color:#e04532">AMC</b>&gt; &lt;AI_ITC&gt; Brutal fire as ready</div>
<div style="position:absolute;left:4.0px;top:81.54px;font-size:5.6px;line-height:6.72px;color:#cfcfcf;font-weight:normal;white-space:nowrap;">&lt;<b style="color:#e04532">AMC</b>&gt; &lt;AI_rascal&gt; RQST refuel@1630;</div>
</div>
<div style="position:absolute;left:188.89999999999998px;top:357.6px;width:142.5px;height:11.2px;background:#040404;border:1px solid #2c2c2c;box-sizing:border-box;border-radius:3px"></div>
<div style="position:absolute;left:193.7px;top:359.94px;font-size:5.6px;line-height:6.72px;color:#464646;font-weight:normal;white-space:nowrap;">Enter Message</div>
<svg style="position:absolute;left:319.8px;top:360.20000000000005px" width="5.6" height="6" viewBox="0 0 5.6 6"><path d="M0.8 0.6L4.8 3 0.8 5.4" stroke="#9a9a9a" stroke-width="0.9" fill="none"/></svg>
<div style="position:absolute;left:188.89999999999998px;top:371.20000000000005px;width:143.70000000000002px;height:11.1px;background:#1a1a1a;border:1px solid #2a2a2a;box-sizing:border-box;border-radius:3px"></div>
<svg style="position:absolute;left:192.89999999999998px;top:372.90000000000003px" width="9.4" height="8" viewBox="0 0 9.4 8"><ellipse cx="4.7" cy="4" rx="3.7" ry="2.8" stroke="#e8e8e8" stroke-width="1.4" fill="none"/></svg>
<svg style="position:absolute;left:213.29999999999998px;top:372.90000000000003px" width="8" height="8" viewBox="0 0 24 24"><path d="M12 2l2.9 6.9 7.1.6-5.4 4.7 1.7 7.3L12 17.7 5.7 21.5l1.7-7.3L2 9.5l7.1-.6z" fill="#f0f0f0"/></svg>
<svg style="position:absolute;left:296.4px;top:372.8px" width="10.4" height="7.2" viewBox="0 0 21 14.5"><rect x="1" y="1" width="11" height="8" rx="3" fill="none" stroke="#c4c4c4" stroke-width="1.8"/><rect x="8" y="4.5" width="11.5" height="8" rx="3" fill="#1a1a1a" stroke="#c4c4c4" stroke-width="1.8"/><path d="M15 12l2.5 2.2V11z" fill="#c4c4c4"/></svg>
<svg style="position:absolute;left:315.6px;top:372.50000000000006px" width="9" height="7.6" viewBox="0 0 18 15"><path d="M1 15v-2.5C1 9.5 3.5 8 9 8s8 1.5 8 4.5V15z" fill="#f0f0f0"/><circle cx="9" cy="5.2" r="5" fill="#f0f0f0" stroke="#1a1a1a" stroke-width="1.2"/></svg>
<div style="position:absolute;left:326.8px;top:373.78px;font-size:4.2px;line-height:5.04px;color:#b4bcc6;font-weight:bold;white-space:nowrap;">1</div>
<div style="position:absolute;left:340.6px;top:212.9px;width:147.7px;height:172.4px;background:#1b1b1b;border:1px solid #2e2e2e;box-sizing:border-box;border-radius:3px;overflow:hidden"></div>
<div style="position:absolute;left:340.6px;top:212.9px;width:147.7px;height:6.8px;background:#395f7f;border-radius:3px 3px 0 0"></div>
<svg style="position:absolute;left:344.20000000000005px;top:213.5px" width="6.2" height="5.9" viewBox="0 0 20 20" preserveAspectRatio="none"><path d="M10 0.8C4.3 0.8 1.2 4.5 1.2 9.5V13.8C1.2 16.5 2.8 18.6 5 19.2H8.4L8.9 14.3H11.1L11.6 19.2H15C17.2 18.6 18.8 16.5 18.8 13.8V9.5C18.8 4.5 15.7 0.8 10 0.8Z" fill="#e6e6e6"/><path d="M3.2 10.6Q6 9.4 8.9 12" stroke="#395f7f" stroke-width="1.9" fill="none"/><path d="M16.8 10.6Q14 9.4 11.1 12" stroke="#395f7f" stroke-width="1.9" fill="none"/></svg>
<div style="position:absolute;left:352.6px;top:212.98px;font-size:5.7px;line-height:6.84px;color:#dce3ea;font-weight:normal;white-space:nowrap;">air force secure</div>
<div style="position:absolute;right:254.10px;top:213.56px;font-size:4.9px;line-height:5.88px;color:#b8c2cc;font-weight:bold;letter-spacing:0.1px;white-space:nowrap">UNCLASS / AIR F...</div>
<div style="position:absolute;left:470.0px;top:213.10px;font-size:5px;line-height:6.00px;color:#b8c0c8;font-weight:normal;white-space:nowrap;">&#8211;</div>
<div style="position:absolute;left:479.5px;top:213.00px;font-size:5.5px;line-height:6.60px;color:#b8c0c8;font-weight:normal;white-space:nowrap;">&#215;</div>
<div style="position:absolute;left:341.6px;top:219.70000000000002px;width:145.7px;height:9.2px;background:#0f0f0f"></div>
<div style="position:absolute;left:341.6px;top:229.0px;width:145.7px;height:1.8px;background:#262626"></div>
<div style="position:absolute;left:343.40000000000003px;top:220.94px;font-size:5.6px;line-height:6.72px;color:#cfcfcf;font-weight:normal;white-space:nowrap;">#Air_Force_Mission_C...</div>
<div style="position:absolute;left:414.6px;top:221.53px;font-size:4.95px;line-height:5.94px;color:#1c9ad0;font-weight:bold;white-space:nowrap;">TOPIC:</div>
<div style="position:absolute;left:341.6px;top:230.80px;width:145.7px;height:125.00px;overflow:hidden">
<div style="position:absolute;left:4.4px;top:0.54px;font-size:5.6px;line-height:6.72px;color:#cfcfcf;font-weight:normal;white-space:nowrap;">* Re-connected</div>
<div style="position:absolute;left:4.4px;top:5.74px;font-size:5.6px;line-height:6.72px;color:#cfcfcf;font-weight:normal;white-space:nowrap;">! <b style="color:#e04532">AMC</b> joined #Air_Force_Mission_Channel_3</div>
<div style="position:absolute;left:4.4px;top:10.94px;font-size:5.6px;line-height:6.72px;color:#cfcfcf;font-weight:normal;white-space:nowrap;">! <b style="color:#3b78d4">irc.tacticalchat.com</b> sets mode +nt</div>
<div style="position:absolute;left:4.4px;top:16.14px;font-size:5.6px;line-height:6.72px;color:#cfcfcf;font-weight:normal;white-space:nowrap;">! #Air_Force_Mission_Channel_3 has 1 users</div>
<div style="position:absolute;left:4.4px;top:21.34px;font-size:5.6px;line-height:6.72px;color:#cfcfcf;font-weight:normal;white-space:nowrap;">&lt;<b style="color:#e04532">AMC</b>&gt; &lt;AI_heavyfuel&gt; .</div>
<div style="position:absolute;left:4.4px;top:26.54px;font-size:5.6px;line-height:6.72px;color:#cfcfcf;font-weight:normal;white-space:nowrap;">&lt;<b style="color:#e04532">AMC</b>&gt; &lt;AI_brutal66&gt; C ROZ SIERRA</div>
<div style="position:absolute;left:4.4px;top:31.74px;font-size:5.6px;line-height:6.72px;color:#cfcfcf;font-weight:normal;white-space:nowrap;">&lt;<b style="color:#e04532">AMC</b>&gt; &lt;AI_heavyfuel&gt; Hi Darren - If the chat is not</div>
<div style="position:absolute;left:4.4px;top:36.94px;font-size:5.6px;line-height:6.72px;color:#cfcfcf;font-weight:normal;white-space:nowrap;">running type 'start' to begin the AIs</div>
<div style="position:absolute;left:4.4px;top:42.14px;font-size:5.6px;line-height:6.72px;color:#cfcfcf;font-weight:normal;white-space:nowrap;">&lt;<b style="color:#e04532">AMC</b>&gt; &lt;AI_ITC&gt; Re-attacks authorized</div>
<div style="position:absolute;left:4.4px;top:47.34px;font-size:5.6px;line-height:6.72px;color:#cfcfcf;font-weight:normal;white-space:nowrap;">&lt;<b style="color:#e04532">AMC</b>&gt; &lt;AI_heavyfuel&gt; heavyfuel ready. Pls advise</div>
<div style="position:absolute;left:4.4px;top:52.54px;font-size:5.6px;line-height:6.72px;color:#cfcfcf;font-weight:normal;white-space:nowrap;">status.</div>
<div style="position:absolute;left:4.4px;top:57.74px;font-size:5.6px;line-height:6.72px;color:#cfcfcf;font-weight:normal;white-space:nowrap;">&lt;<b style="color:#e04532">AMC</b>&gt; &lt;AI_heavyfuel&gt; status</div>
<div style="position:absolute;left:4.4px;top:62.94px;font-size:5.6px;line-height:6.72px;color:#cfcfcf;font-weight:normal;white-space:nowrap;">&lt;<b style="color:#e04532">AMC</b>&gt; &lt;AI_rascal&gt; RQST refuel@1630;</div>
<div style="position:absolute;left:4.4px;top:68.14px;font-size:5.6px;line-height:6.72px;color:#cfcfcf;font-weight:normal;white-space:nowrap;">&lt;<b style="color:#e04532">AMC</b>&gt; &lt;AI_ITC&gt; Brutal fire as ready</div>
<div style="position:absolute;left:4.4px;top:73.34px;font-size:5.6px;line-height:6.72px;color:#cfcfcf;font-weight:normal;white-space:nowrap;">&lt;<b style="color:#e04532">AMC</b>&gt; &lt;AI_rascal&gt; RQST refuel@1630;</div>
</div>
<div style="position:absolute;left:342.8px;top:357.8px;width:141.89999999999998px;height:11.2px;background:#040404;border:1px solid #2c2c2c;box-sizing:border-box;border-radius:3px"></div>
<div style="position:absolute;left:347.6px;top:360.14px;font-size:5.6px;line-height:6.72px;color:#464646;font-weight:normal;white-space:nowrap;">Enter Message</div>
<svg style="position:absolute;left:473.1px;top:360.40000000000003px" width="5.6" height="6" viewBox="0 0 5.6 6"><path d="M0.8 0.6L4.8 3 0.8 5.4" stroke="#9a9a9a" stroke-width="0.9" fill="none"/></svg>
<div style="position:absolute;left:342.8px;top:371.40000000000003px;width:143.1px;height:11.1px;background:#1a1a1a;border:1px solid #2a2a2a;box-sizing:border-box;border-radius:3px"></div>
<svg style="position:absolute;left:346.8px;top:373.1px" width="9.4" height="8" viewBox="0 0 9.4 8"><ellipse cx="4.7" cy="4" rx="3.7" ry="2.8" stroke="#e8e8e8" stroke-width="1.4" fill="none"/></svg>
<svg style="position:absolute;left:367.20000000000005px;top:373.1px" width="8" height="8" viewBox="0 0 24 24"><path d="M12 2l2.9 6.9 7.1.6-5.4 4.7 1.7 7.3L12 17.7 5.7 21.5l1.7-7.3L2 9.5l7.1-.6z" fill="#f0f0f0"/></svg>
<svg style="position:absolute;left:449.7px;top:373.0px" width="10.4" height="7.2" viewBox="0 0 21 14.5"><rect x="1" y="1" width="11" height="8" rx="3" fill="none" stroke="#c4c4c4" stroke-width="1.8"/><rect x="8" y="4.5" width="11.5" height="8" rx="3" fill="#1a1a1a" stroke="#c4c4c4" stroke-width="1.8"/><path d="M15 12l2.5 2.2V11z" fill="#c4c4c4"/></svg>
<svg style="position:absolute;left:468.90000000000003px;top:372.70000000000005px" width="9" height="7.6" viewBox="0 0 18 15"><path d="M1 15v-2.5C1 9.5 3.5 8 9 8s8 1.5 8 4.5V15z" fill="#f0f0f0"/><circle cx="9" cy="5.2" r="5" fill="#f0f0f0" stroke="#1a1a1a" stroke-width="1.2"/></svg>
<div style="position:absolute;left:480.1px;top:373.98px;font-size:4.2px;line-height:5.04px;color:#b4bcc6;font-weight:bold;white-space:nowrap;">1</div>
<div style="position:absolute;left:615px;top:14px;width:90px;height:380.5px;background:#404040"></div>
<div style="position:absolute;left:615px;top:14px;width:0.8px;height:380.5px;background:#111"></div>
<div style="position:absolute;left:620.5px;top:19.6px;width:75.2px;height:368.8px;background:#1b1b1b;border-radius:2px 2px 3px 3px;box-shadow:0 0 0 0.8px #4a4a4a"></div>
<div style="position:absolute;left:620.5px;top:19.6px;width:75.2px;height:16.6px;background:#1e1e1e"></div>
<div style="position:absolute;left:620.5px;top:36.2px;width:75.2px;height:1.2px;background:#2c2c2c"></div>
<svg style="position:absolute;left:626.8px;top:23.9px" width="9.5" height="7.8" viewBox="0 0 19 16"><rect x="0.8" y="0.8" width="17" height="14.4" fill="none" stroke="#a4a4a4" stroke-width="1.2"/><rect x="13" y="0.8" width="4.8" height="14.4" fill="#f0f0f0"/></svg>
<svg style="position:absolute;left:647.2px;top:24.4px" width="5.5" height="7" viewBox="0 0 11 14"><path d="M1 0.5C5.5 2 8.5 4 10 7 8.5 10 5.5 12 1 13.5 3.5 10.5 4 9 4 7 4 5 3.5 3.5 1 0.5z" fill="#d4d4d4"/></svg>
<div style="position:absolute;left:663.8px;top:27px;width:8.8px;height:1.9px;background:#bcbcbc"></div>
<svg style="position:absolute;left:680.8px;top:23.4px" width="10" height="8.6" viewBox="0 0 20 17.2"><path d="M6.2 3.2A7 7 0 1 0 13.8 3.2" fill="none" stroke="#e6e6e6" stroke-width="1.7"/><line x1="10" y1="1.2" x2="10" y2="8.6" stroke="#e6e6e6" stroke-width="1.8"/></svg>
<svg style="position:absolute;left:653.0px;top:40.6px" width="11.6" height="11.8" viewBox="0 0 20 20" preserveAspectRatio="none"><path d="M10 0.8C4.3 0.8 1.2 4.5 1.2 9.5V13.8C1.2 16.5 2.8 18.6 5 19.2H8.4L8.9 14.3H11.1L11.6 19.2H15C17.2 18.6 18.8 16.5 18.8 13.8V9.5C18.8 4.5 15.7 0.8 10 0.8Z" fill="#dedede"/><path d="M3.2 10.6Q6 9.4 8.9 12" stroke="#1b1b1b" stroke-width="1.9" fill="none"/><path d="M16.8 10.6Q14 9.4 11.1 12" stroke="#1b1b1b" stroke-width="1.9" fill="none"/></svg>
<div style="position:absolute;left:642.3px;top:51.94px;font-size:6.6px;line-height:7.92px;color:#d8d8d8;font-weight:bold;white-space:nowrap;">SENTINEL</div>
<div style="position:absolute;left:641.6px;top:58.95px;font-size:3.75px;line-height:4.50px;color:#9a9a9a;font-weight:normal;white-space:nowrap;">by Trusted Solutions</div>
<div style="position:absolute;left:620.5px;top:66.6px;width:75.2px;height:1.2px;background:#2a2a2a"></div>
<div style="position:absolute;left:635.3px;top:71.72px;font-size:8.3px;line-height:9.96px;color:#1ea2dc;font-weight:bold;white-space:nowrap;">CHANNELS</div>
<div style="position:absolute;left:624.9px;top:84.1px;width:67.9px;height:193.1px;background:#202020;border:1px solid #3a3a3a;box-sizing:border-box;border-radius:3px"></div>
<div style="position:absolute;left:626px;top:88px;width:66px;height:9.9px;background:#5088b2"></div>
<svg style="position:absolute;left:631px;top:90.1px" width="4.8" height="5.2" viewBox="0 0 10 11"><path d="M2.5 5V3.5a2.5 2.5 0 0 1 5 0V5" stroke="#eee" stroke-width="1.5" fill="none"/><rect x="1" y="5" width="8" height="6" rx="1" fill="#eee"/></svg>
<div style="position:absolute;left:640px;top:89.70px;font-size:5.5px;line-height:6.60px;color:#e6eef6;font-weight:normal;white-space:nowrap;">air force secure</div>
<div style="position:absolute;left:640px;top:101.44px;font-size:5.6px;line-height:6.72px;color:#d8d8d8;font-weight:normal;white-space:nowrap;">#Air_Force_Missi...</div>
<div style="position:absolute;left:640px;top:115.04px;font-size:5.6px;line-height:6.72px;color:#d8d8d8;font-weight:normal;white-space:nowrap;">#Air_Force_Missi...</div>
<div style="position:absolute;left:640px;top:128.44px;font-size:5.6px;line-height:6.72px;color:#d8d8d8;font-weight:normal;white-space:nowrap;">#Air_Force_Missi...</div>
<div style="position:absolute;left:626px;top:139.3px;width:66px;height:13.3px;background:#4b5152"></div>
<div style="position:absolute;left:640px;top:142.44px;font-size:5.6px;line-height:6.72px;color:#dcdcdc;font-weight:normal;white-space:nowrap;">#Air_Force_Missi...</div>
<div style="position:absolute;left:640px;top:156.04px;font-size:5.6px;line-height:6.72px;color:#d8d8d8;font-weight:normal;white-space:nowrap;">#Air_Force_Missi...</div>
<div style="position:absolute;left:626px;top:166px;width:66px;height:10.2px;background:#118212"></div>
<svg style="position:absolute;left:631px;top:168.6px" width="4.8" height="5.2" viewBox="0 0 10 11"><path d="M2.5 5V3.5a2.5 2.5 0 0 1 5 0V5" stroke="#eee" stroke-width="1.5" fill="none"/><rect x="1" y="5" width="8" height="6" rx="1" fill="#eee"/></svg>
<div style="position:absolute;left:640px;top:167.84px;font-size:5.6px;line-height:6.72px;color:#e6f2e6;font-weight:normal;white-space:nowrap;">army secure</div>
<div style="position:absolute;left:629.2px;top:179px;width:8.3px;height:8.3px;border-radius:50%;background:#28a8ea;box-sizing:border-box;border:0.8px solid #d0eefc;color:#fff;font-size:4.6px;line-height:6.7px;text-align:center;font-weight:bold;font-family:'Liberation Sans'">6</div>
<div style="position:absolute;left:640px;top:179.83px;font-size:5.45px;line-height:6.54px;color:#d8d8d8;font-weight:normal;white-space:nowrap;">#al_heavyfuel_158</div>
<div style="position:absolute;left:620.5px;top:280.8px;width:75.2px;height:107.6px;background:#161616;border-radius:0 0 3px 3px"></div>
<div style="position:absolute;left:620.5px;top:280.8px;width:75.2px;height:1px;background:#2a2a2a"></div>
<div style="position:absolute;left:635.2px;top:284.26px;font-size:8.4px;line-height:10.08px;color:#1ea2dc;font-weight:bold;white-space:nowrap;">CONTROLS</div>
<svg style="position:absolute;left:654.2px;top:296px" width="9.2" height="4" viewBox="0 0 18 8"><path d="M1 1.2L9 5.6 17 1.2" stroke="#1ea2dc" stroke-width="3" fill="none"/></svg>
<div style="position:absolute;left:643.0px;top:307.84px;font-size:6.6px;line-height:7.92px;color:#e4e4e4;font-weight:bold;white-space:nowrap;">Join Controls</div>
<div style="position:absolute;left:643.0px;top:325.24px;font-size:6.6px;line-height:7.92px;color:#e4e4e4;font-weight:bold;white-space:nowrap;">Transfers</div>
<div style="position:absolute;left:643.0px;top:341.74px;font-size:6.6px;line-height:7.92px;color:#e4e4e4;font-weight:bold;white-space:nowrap;">Keywords</div>
<div style="position:absolute;left:643.0px;top:358.34px;font-size:6.6px;line-height:7.92px;color:#e4e4e4;font-weight:bold;white-space:nowrap;">Settings</div>
<div style="position:absolute;left:643.0px;top:374.94px;font-size:6.6px;line-height:7.92px;color:#e4e4e4;font-weight:bold;white-space:nowrap;">Support</div>
<svg style="position:absolute;left:628.8px;top:306.8px" width="10.2" height="10" viewBox="0 0 20 20"><circle cx="8.5" cy="5.2" r="4.6" fill="#e2e2e2"/><path d="M0.5 17c0-4.5 3-7 8-7 3 0 5 .8 6.5 2.2V17H0.5z" fill="#e2e2e2"/><circle cx="15" cy="15.2" r="3.4" fill="#161616" stroke="#e2e2e2" stroke-width="1.8"/></svg>
<svg style="position:absolute;left:629px;top:325.2px" width="9.4" height="7.6" viewBox="0 0 19 15"><path d="M4.5 0.5L9 6H6.3v8.5H2.7V6H0z" fill="#ececec"/><path d="M14.5 14.5L19 9h-2.7V0.5h-3.6V9H10z" fill="#ececec"/></svg>
<svg style="position:absolute;left:629.8px;top:341.3px" width="8.4" height="8.4" viewBox="0 0 16 16"><g stroke="#ececec" stroke-width="1.9"><line x1="5.8" y1="0.5" x2="4.6" y2="15.5"/><line x1="11.8" y1="0.5" x2="10.6" y2="15.5"/><line x1="0.5" y1="5.2" x2="15.5" y2="5.2"/><line x1="0.5" y1="10.8" x2="15.5" y2="10.8"/></g></svg>
<svg style="position:absolute;left:629.2px;top:357.6px" width="9.2" height="9.2" viewBox="0 0 18 18"><circle cx="9" cy="9" r="5.6" fill="none" stroke="#ececec" stroke-width="2.6"/><g fill="#ececec"><rect x="8.1" y="0.6" width="1.8" height="2.6" transform="rotate(0 9 9)"/><rect x="8.1" y="0.6" width="1.8" height="2.6" transform="rotate(30 9 9)"/><rect x="8.1" y="0.6" width="1.8" height="2.6" transform="rotate(60 9 9)"/><rect x="8.1" y="0.6" width="1.8" height="2.6" transform="rotate(90 9 9)"/><rect x="8.1" y="0.6" width="1.8" height="2.6" transform="rotate(120 9 9)"/><rect x="8.1" y="0.6" width="1.8" height="2.6" transform="rotate(150 9 9)"/><rect x="8.1" y="0.6" width="1.8" height="2.6" transform="rotate(180 9 9)"/><rect x="8.1" y="0.6" width="1.8" height="2.6" transform="rotate(210 9 9)"/><rect x="8.1" y="0.6" width="1.8" height="2.6" transform="rotate(240 9 9)"/><rect x="8.1" y="0.6" width="1.8" height="2.6" transform="rotate(270 9 9)"/><rect x="8.1" y="0.6" width="1.8" height="2.6" transform="rotate(300 9 9)"/><rect x="8.1" y="0.6" width="1.8" height="2.6" transform="rotate(330 9 9)"/></g></svg>
<svg style="position:absolute;left:628.9px;top:374px" width="9.8" height="9.8" viewBox="0 0 20 20"><circle cx="10" cy="10" r="9.6" fill="#e4e4e4"/><text x="10" y="13.6" font-size="9.5" font-weight="bold" text-anchor="middle" fill="#444" font-family="Liberation Sans">?</text></svg>
</div></body></html>
